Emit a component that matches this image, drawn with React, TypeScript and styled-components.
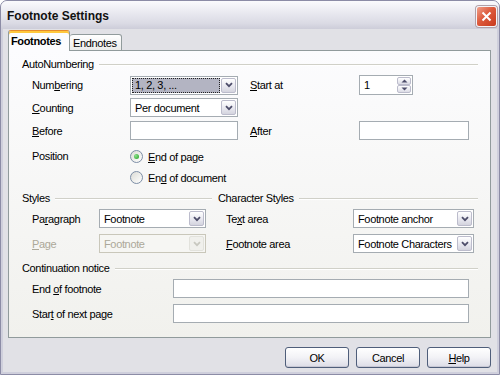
import styled, { createGlobalStyle } from 'styled-components';

const GlobalStyle = createGlobalStyle`
  html, body {
    margin: 0;
    padding: 0;
  }
  body {
    width: 500px;
    height: 375px;
    overflow: hidden;
    font-family: "Liberation Sans", Arial, sans-serif;
    font-size: 11px;
    letter-spacing: -0.35px;
    color: #000;
  }
  * {
    box-sizing: border-box;
  }
`;

// Window chrome
const Frame = styled.div`
  width: 500px;
  height: 375px;
  display: flex;
  flex-direction: column;
  border: 1px solid #8c8ca6;
  border-radius: 7px 7px 0 0;
  background: #cfcfdc;
  overflow: hidden;
`;

const TitleBar = styled.div`
  height: 28px;
  flex-shrink: 0;
  display: flex;
  align-items: center;
  justify-content: space-between;
  padding: 0 2px 0 6px;
  background: linear-gradient(#fbfbfd 0%, #ececf2 35%, #dadae4 80%, #cdcdd9 100%);
`;

const Title = styled.span`
  font-weight: bold;
  font-size: 12px;
  letter-spacing: 0;
  color: #111;
  margin-top: 1px;
`;

const CloseButton = styled.div`
  width: 21px;
  height: 21px;
  border-radius: 3px;
  border: 1px solid #f4f4f8;
  background: linear-gradient(135deg, #f0a08a 0%, #dd5a3c 45%, #c8391d 100%);
  box-shadow: 0 0 0 1px #b0a0a8;
  display: flex;
  align-items: center;
  justify-content: center;
  margin-top: 2px;
`;

const Client = styled.div`
  flex: 1;
  margin: 0 2px 2px;
  background: #e1e1e6;
  padding: 1px 6px 0 5px;
  display: flex;
  flex-direction: column;
`;

// Tabs
const TabStrip = styled.div`
  display: flex;
  align-items: flex-end;
  height: 21px;
  margin-bottom: -1px;
  position: relative;
  z-index: 1;
`;

const Tab = styled.div<{ $active?: boolean; $width: number }>`
  width: ${(p) => p.$width}px;
  height: ${(p) => (p.$active ? 21 : 17)}px;
  border: 1px solid #919b9c;
  border-bottom: ${(p) => (p.$active ? 'none' : '1px solid #919b9c')};
  border-left: ${(p) => (p.$active ? '1px solid #919b9c' : 'none')};
  border-radius: 3px 3px 0 0;
  border-top-color: ${(p) => (p.$active ? '#e68b2c' : '#919b9c')};
  box-shadow: ${(p) => (p.$active ? 'inset 0 2px 0 #ffc83c' : 'none')};
  background: ${(p) => (p.$active ? '#fcfcfe' : 'linear-gradient(#ffffff, #ececeb)')};
  font-weight: ${(p) => (p.$active ? 'bold' : 'normal')};
  padding: ${(p) => (p.$active ? '4px 0 0 2px' : '2px 0 0 3px')};
`;

const Panel = styled.div`
  height: 288px;
  border: 1px solid #919b9c;
  background: linear-gradient(#fcfcfe, #f1f1ed);
  padding: 7px 12px 0 13px;
  display: flex;
  flex-direction: column;
`;

// Groups
const GroupHeader = styled.div<{ $top?: number }>`
  display: flex;
  align-items: center;
  height: 13px;
  line-height: 13px;
  margin-top: ${(p) => p.$top ?? 0}px;
`;

const GroupLine = styled.div`
  flex: 1;
  margin-left: 5px;
  border-top: 1px solid #d0d0c8;
  border-bottom: 1px solid #ffffff;
`;

const Rows = styled.div<{ $top: number; $gap: number; $indent?: number }>`
  display: flex;
  flex-direction: column;
  gap: ${(p) => p.$gap}px;
  margin-top: ${(p) => p.$top}px;
  padding-left: ${(p) => p.$indent ?? 10}px;
`;

const Row = styled.div<{ $top?: number; $align?: string }>`
  display: flex;
  align-items: ${(p) => p.$align ?? 'center'};
  min-height: 19px;
  margin-top: ${(p) => p.$top ?? 0}px;
`;

const Label = styled.span<{ $width: number; $disabled?: boolean; $lh?: number }>`
  width: ${(p) => p.$width}px;
  flex-shrink: 0;
  white-space: nowrap;
  color: ${(p) => (p.$disabled ? '#aca899' : '#000')};
  line-height: ${(p) => (p.$lh ? `${p.$lh}px` : 'normal')};
`;

const Spacer = styled.div<{ $width: number }>`
  width: ${(p) => p.$width}px;
  flex-shrink: 0;
`;

const Columns = styled.div`
  display: flex;
  gap: 6px;
  margin-top: 4px;
`;

const Column = styled.div<{ $width: number }>`
  width: ${(p) => p.$width}px;
  display: flex;
  flex-direction: column;
`;

// Controls
const TextBox = styled.div<{ $width: number }>`
  width: ${(p) => p.$width}px;
  height: 19px;
  border: 1px solid #a5acb2;
  background: #fff;
`;

const ComboBox = styled.div<{ $width: number; $disabled?: boolean }>`
  width: ${(p) => p.$width}px;
  height: 19px;
  border: 1px solid ${(p) => (p.$disabled ? '#c9c7ba' : '#a5acb2')};
  background: ${(p) => (p.$disabled ? '#f6f6f3' : '#fff')};
  display: flex;
  align-items: stretch;
  padding: 1px;
`;

const ComboText = styled.div<{ $selected?: boolean; $disabled?: boolean }>`
  flex: 1;
  display: flex;
  align-items: center;
  padding-left: 3px;
  white-space: nowrap;
  overflow: hidden;
  color: ${(p) => (p.$disabled ? '#aca899' : '#000')};
  background: ${(p) => (p.$selected ? '#b3b4c2' : 'transparent')};
  outline: ${(p) => (p.$selected ? '1px dotted #222' : 'none')};
  outline-offset: -1px;
  margin-right: 1px;
`;

const DropButton = styled.div<{ $disabled?: boolean }>`
  width: 15px;
  flex-shrink: 0;
  border: 1px solid ${(p) => (p.$disabled ? '#e2e2dc' : '#bcbccc')};
  border-radius: 2px;
  background: ${(p) =>
    p.$disabled ? '#f0f0ec' : 'linear-gradient(#ffffff, #e6e6ee 60%, #d4d4de)'};
  display: flex;
  align-items: center;
  justify-content: center;
`;

const SpinBox = styled.div`
  width: 54px;
  height: 20px;
  border: 1px solid #a5acb2;
  background: #fff;
  display: flex;
  padding: 1px;
`;

const SpinText = styled.div`
  flex: 1;
  display: flex;
  align-items: center;
  padding-left: 3px;
`;

const SpinButtons = styled.div`
  width: 14px;
  display: flex;
  flex-direction: column;
`;

const SpinHalf = styled.div`
  flex: 1;
  border: 1px solid #bcbccc;
  border-radius: 2px;
  background: linear-gradient(#ffffff, #dcdce6);
  display: flex;
  align-items: center;
  justify-content: center;
`;

const RadioGroup = styled.div`
  display: flex;
  flex-direction: column;
`;

const RadioRow = styled.div`
  display: flex;
  align-items: center;
  height: 21px;
  gap: 5px;
`;

const RadioCircle = styled.div<{ $checked?: boolean }>`
  width: 13px;
  height: 13px;
  border-radius: 50%;
  border: 1px solid #7d8ea6;
  background: linear-gradient(135deg, #dcdcd6, #ffffff);
  display: flex;
  align-items: center;
  justify-content: center;
  &::after {
    content: '';
    display: ${(p) => (p.$checked ? 'block' : 'none')};
    width: 5px;
    height: 5px;
    border-radius: 50%;
    background: radial-gradient(circle at 35% 35%, #8de08d, #21a121);
  }
`;

// Buttons
const ButtonBar = styled.div`
  display: flex;
  justify-content: flex-end;
  gap: 7px;
  margin-top: 9px;
`;

const Button = styled.div`
  width: 64px;
  height: 21px;
  border: 1px solid #4f5e7a;
  border-radius: 3px;
  background: linear-gradient(#ffffff, #f2f2f6 50%, #dcdce6);
  box-shadow: inset 0 -1px 0 #c8c8d4;
  display: flex;
  align-items: center;
  justify-content: center;
`;

const Chevron = ({ color = '#4d4d6a' }: { color?: string }) => (
  <svg width="8" height="6" viewBox="0 0 8 6">
    <path d="M1 1.2 L4 4.2 L7 1.2" fill="none" stroke={color} strokeWidth="1.8" />
  </svg>
);

const Triangle = ({ up }: { up?: boolean }) => (
  <svg width="7" height="4" viewBox="0 0 7 4">
    <path d={up ? 'M0.5 3.5 L3.5 0.5 L6.5 3.5 Z' : 'M0.5 0.5 L3.5 3.5 L6.5 0.5 Z'} fill="#4d4d6a" />
  </svg>
);

const Combo = ({
  width,
  value,
  selected,
  disabled,
}: {
  width: number;
  value: string;
  selected?: boolean;
  disabled?: boolean;
}) => (
  <ComboBox $width={width} $disabled={disabled}>
    <ComboText $selected={selected} $disabled={disabled}>
      {value}
    </ComboText>
    <DropButton $disabled={disabled}>
      <Chevron color={disabled ? '#c8c8c0' : '#4d4d6a'} />
    </DropButton>
  </ComboBox>
);

const App = () => {
  return (
    <>
      <GlobalStyle />
      <Frame>
        <TitleBar>
          <Title>Footnote Settings</Title>
          <CloseButton>
            <svg width="11" height="11" viewBox="0 0 11 11">
              <path d="M1.5 1.5 L9.5 9.5 M9.5 1.5 L1.5 9.5" stroke="#fff" strokeWidth="2" />
            </svg>
          </CloseButton>
        </TitleBar>
        <Client>
          <TabStrip>
            <Tab $active $width={62}>
              Footnotes
            </Tab>
            <Tab $width={52}>Endnotes</Tab>
          </TabStrip>
          <Panel>
            <GroupHeader>
              AutoNumbering
              <GroupLine />
            </GroupHeader>
            <Rows $top={4} $gap={3}>
              <Row>
                <Label $width={98}>
                  Num<u>b</u>ering
                </Label>
                <Combo width={108} value="1, 2, 3, ..." selected />
                <Spacer $width={12} />
                <Label $width={109}>
                  <u>S</u>tart at
                </Label>
                <SpinBox>
                  <SpinText>1</SpinText>
                  <SpinButtons>
                    <SpinHalf>
                      <Triangle up />
                    </SpinHalf>
                    <SpinHalf>
                      <Triangle />
                    </SpinHalf>
                  </SpinButtons>
                </SpinBox>
              </Row>
              <Row>
                <Label $width={98}>
                  <u>C</u>ounting
                </Label>
                <Combo width={108} value="Per document" />
              </Row>
              <Row $top={1}>
                <Label $width={98}>
                  <u>B</u>efore
                </Label>
                <TextBox $width={108} />
                <Spacer $width={12} />
                <Label $width={109}>
                  <u>A</u>fter
                </Label>
                <TextBox $width={110} />
              </Row>
              <Row $top={3} $align="flex-start">
                <Label $width={98} $lh={21}>
                  Position
                </Label>
                <RadioGroup>
                  <RadioRow>
                    <RadioCircle $checked />
                    <span>
                      <u>E</u>nd of page
                    </span>
                  </RadioRow>
                  <RadioRow>
                    <RadioCircle />
                    <span>
                      En<u>d</u> of document
                    </span>
                  </RadioRow>
                </RadioGroup>
              </Row>
            </Rows>

            <Columns>
              <Column $width={190}>
                <GroupHeader>
                  Styles
                  <GroupLine />
                </GroupHeader>
                <Rows $top={4} $gap={6}>
                  <Row>
                    <Label $width={67}>
                      Pa<u>r</u>agraph
                    </Label>
                    <Combo width={107} value="Footnote" />
                  </Row>
                  <Row>
                    <Label $width={67} $disabled>
                      <u>P</u>age
                    </Label>
                    <Combo width={107} value="Footnote" disabled />
                  </Row>
                </Rows>
              </Column>
              <Column $width={260}>
                <GroupHeader>
                  Character Styles
                  <GroupLine />
                </GroupHeader>
                <Rows $top={4} $gap={6} $indent={8}>
                  <Row>
                    <Label $width={127}>
                      Te<u>x</u>t area
                    </Label>
                    <Combo width={121} value="Footnote anchor" />
                  </Row>
                  <Row>
                    <Label $width={127}>
                      <u>F</u>ootnote area
                    </Label>
                    <Combo width={121} value="Footnote Characters" />
                  </Row>
                </Rows>
              </Column>
            </Columns>

            <GroupHeader $top={9}>
              Continuation notice
              <GroupLine />
            </GroupHeader>
            <Rows $top={4} $gap={6}>
              <Row>
                <Label $width={141}>
                  End <u>o</u>f footnote
                </Label>
                <TextBox $width={296} />
              </Row>
              <Row>
                <Label $width={141}>
                  Star<u>t</u> of next page
                </Label>
                <TextBox $width={296} />
              </Row>
            </Rows>
          </Panel>
          <ButtonBar>
            <Button>OK</Button>
            <Button>Cancel</Button>
            <Button>
              <span>
                <u>H</u>elp
              </span>
            </Button>
          </ButtonBar>
        </Client>
      </Frame>
    </>
  );
};

export default App;
